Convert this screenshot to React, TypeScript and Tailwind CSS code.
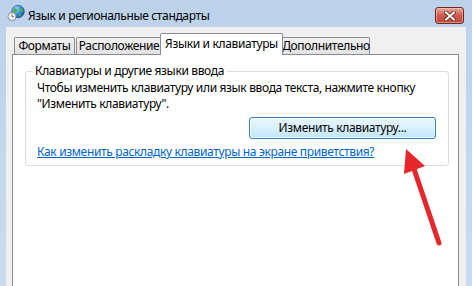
const TABS = [
  { label: 'Форматы', w: 'w-[61px]', cls: '' },
  { label: 'Расположение', w: 'w-[86px]', cls: 'ml-[1px]' },
  { label: 'Языки и клавиатуры', w: 'w-[123px]', cls: '-ml-[2px]', active: true },
  { label: 'Дополнительно', w: 'w-[88px]', cls: '-ml-[1px]' },
];

function RegionIcon() {
  return (
    <svg width="18" height="18" viewBox="0 0 18 18" className="mt-[4px] shrink-0">
      <defs>
        <radialGradient id="globe" cx="0.35" cy="0.3" r="0.8">
          <stop offset="0" stopColor="#9fd8ff" />
          <stop offset="0.6" stopColor="#2b7fd6" />
          <stop offset="1" stopColor="#134f9c" />
        </radialGradient>
      </defs>
      <circle cx="11" cy="7.5" r="6.3" fill="url(#globe)" stroke="#1c4f8a" strokeWidth="0.6" />
      <path d="M7 4.5 C9 3.5 10.5 5 10 6.5 C9.5 8 8 8 7.5 9.5 C6.5 8.5 6 6 7 4.5 Z" fill="#4fb23a" />
      <path d="M12.5 3 C14.5 3.5 16 5.5 16.5 7.5 C15 8.5 13.5 7 13 5.5 C12.3 4.5 12 3.6 12.5 3 Z" fill="#4fb23a" />
      <path d="M11.5 10 C13 9.5 14.5 10.5 14 12.5 C12.8 12.8 11.5 11.5 11.5 10 Z" fill="#4fb23a" />
      <circle cx="5" cy="12.5" r="4" fill="#f4f4f4" stroke="#7a7a7a" strokeWidth="0.8" />
      <path d="M5 10.3 V12.6 H6.8" fill="none" stroke="#444" strokeWidth="0.8" />
    </svg>
  );
}

function CloseButton() {
  return (
    <div className="mt-[7px] flex h-[17px] w-[29px] items-center justify-center rounded-[3px] border border-[#6b2b25] bg-gradient-to-b from-[#e9a898] via-[#d05a4c] to-[#c0473a] shadow-[inset_0_0_0_1px_rgba(255,220,210,0.45)]">
      <svg width="12" height="10" viewBox="0 0 12 10">
        <path d="M2 1.5 L10 8.5 M10 1.5 L2 8.5" stroke="#5a2520" strokeWidth="3.6" strokeLinecap="square" />
        <path d="M2 1.5 L10 8.5 M10 1.5 L2 8.5" stroke="#ffffff" strokeWidth="2" strokeLinecap="square" />
      </svg>
    </div>
  );
}

export default function App() {
  return (
    <div className="relative flex h-[286px] w-[472px] flex-col overflow-hidden bg-gradient-to-b from-[#bcd2ea] to-[#c9dcf0] font-['Noto_Sans',sans-serif] text-[12px] tracking-[-0.35px] text-black">
      {/* title bar */}
      <div className="flex h-[27px] shrink-0 items-start pl-[7px] pr-[8px]">
        <RegionIcon />
        <span className="ml-[3px] mt-[8px] leading-[16px] text-[#000]">
          Язык и региональные стандарты
        </span>
        <div className="flex-1" />
        <CloseButton />
      </div>

      {/* client area */}
      <div className="mx-[6px] flex flex-1 flex-col bg-[#f0f0f0] pl-[6px] pr-[7px] pt-[6px]">
        <div className="flex h-[21px] items-end pl-[2px]">
          {TABS.map((t) =>
            t.active ? (
              <div
                key={t.label}
                className={`relative z-10 -mb-px flex h-[22px] items-center justify-center whitespace-nowrap rounded-t-[2px] border border-b-0 border-[#898c95] bg-white pb-[2px] ${t.w} ${t.cls}`}
              >
                {t.label}
              </div>
            ) : (
              <div
                key={t.label}
                className={`flex h-[17px] items-center justify-center whitespace-nowrap rounded-t-[2px] border border-b-0 border-[#898c95] bg-gradient-to-b from-[#f3f3f3] to-[#e2e2e2] ${t.w} ${t.cls}`}
              >
                {t.label}
              </div>
            ),
          )}
        </div>

        <div className="flex-1 border border-b-0 border-[#898c95] bg-white pt-[8px]">
          <fieldset className="ml-[12px] w-[424px] rounded-[3px] border border-[#d5dfe5] pb-[6px] pl-[11px] pr-[12px]">
            <legend className="-ml-[5px] px-[3px] leading-[16px]">
              Клавиатуры и другие языки ввода
            </legend>
            <p className="mt-[1px] whitespace-nowrap leading-[16px]">
              Чтобы изменить клавиатуру или язык ввода текста, нажмите кнопку
              <br />
              "Изменить клавиатуру".
            </p>
            <div className="mt-[5px] flex justify-end">
              <button className="flex h-[22px] w-[187px] items-center justify-center rounded-[3px] border border-[#3c7fb1] bg-gradient-to-b from-[#eaf6fd] via-[#d9f0fc] to-[#bee6fd] shadow-[inset_0_0_0_1px_rgba(255,255,255,0.7)]">
                Изменить клавиатуру...
              </button>
            </div>
            <a className="mt-[5px] block whitespace-nowrap leading-[15px] text-[#0066cc] underline">
              Как изменить раскладку клавиатуры на экране приветствия?
            </a>
          </fieldset>
        </div>
      </div>

      {/* red annotation arrow */}
      <svg className="pointer-events-none absolute left-0 top-0" width="472" height="286">
        <path d="M439 243 L413 166" stroke="#e6262a" strokeWidth="5" strokeLinecap="round" />
        <path d="M406 149 L404 174 L425 166 Z" fill="#e6262a" />
      </svg>
    </div>
  );
}
